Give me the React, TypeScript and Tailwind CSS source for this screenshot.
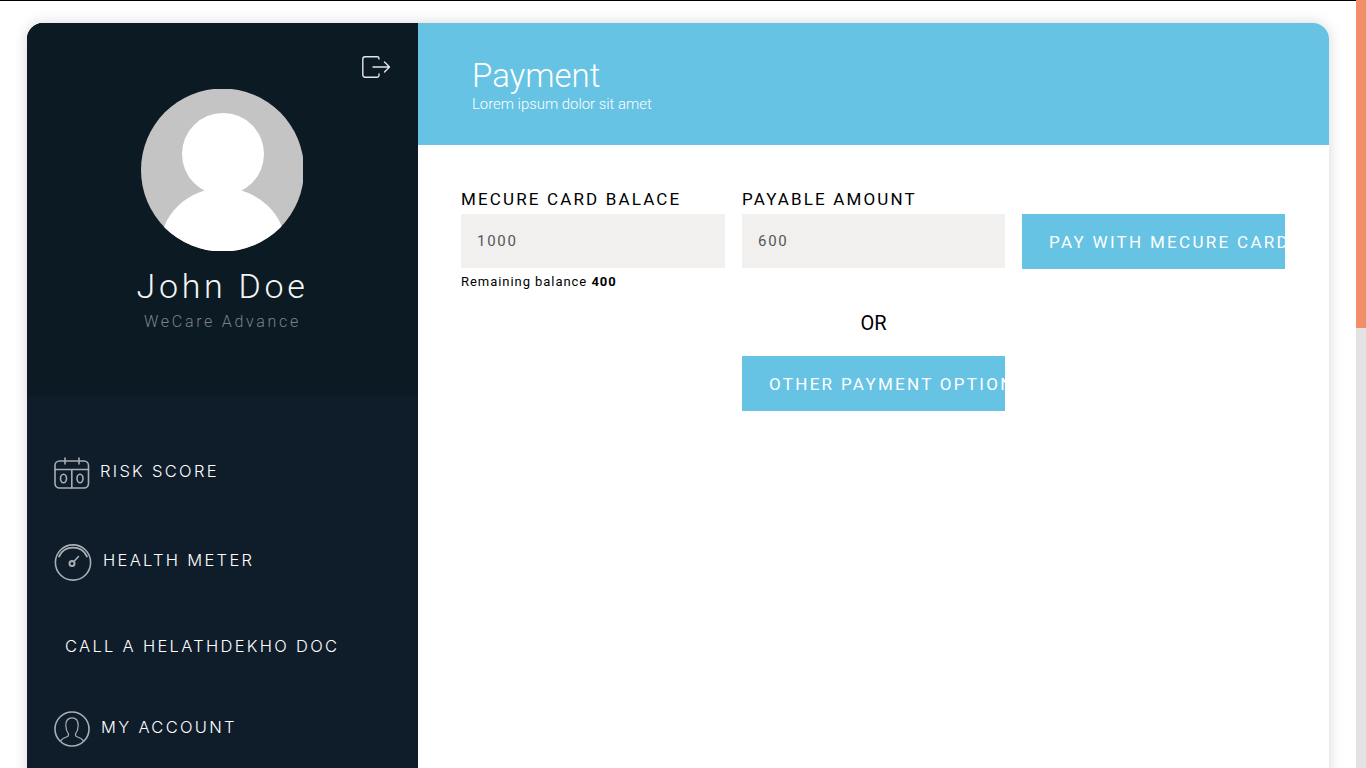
const sans = "font-['Roboto','Liberation_Sans',sans-serif]";
const menuFont = "font-['Inter','Liberation_Sans',sans-serif]";

function LogoutIcon() {
  return (
    <svg width="29" height="22" viewBox="0 0 29 22" fill="none" stroke="#e4e6e8" strokeWidth="1.4" strokeLinecap="round" strokeLinejoin="round">
      <path d="M17 3V2.5A1.8 1.8 0 0 0 15.2 0.8H3A2.2 2.2 0 0 0 0.8 3V19A2.2 2.2 0 0 0 3 21.2H15.2A1.8 1.8 0 0 0 17 19.5V18" />
      <path d="M11 11H27.5M22.5 6L27.5 11L22.5 16" />
    </svg>
  );
}

function Avatar() {
  return (
    <svg width="162" height="162" viewBox="0 0 162 162" className="block">
      <defs>
        <clipPath id="avatar-clip">
          <circle cx="81.5" cy="81" r="81.5" />
        </clipPath>
      </defs>
      <g clipPath="url(#avatar-clip)">
        <rect width="162" height="162" fill="#c4c4c4" />
        <circle cx="82" cy="65" r="41" fill="#fff" />
        <ellipse cx="82" cy="159" rx="63" ry="60" fill="#fff" />
      </g>
    </svg>
  );
}

function ScoreIcon() {
  return (
    <svg width="36" height="32" viewBox="0 0 36 32" fill="none" stroke="#a9aeb3" strokeWidth="1.6" strokeLinecap="round">
      <rect x="1" y="4" width="33.5" height="27" rx="4.5" />
      <path d="M1 12.5H34.5M17.8 12.5V31M11 1V7M25 1V7" />
      <ellipse cx="9.5" cy="21.5" rx="3" ry="4.2" />
      <ellipse cx="26" cy="21.5" rx="3" ry="4.2" />
    </svg>
  );
}

function MeterIcon() {
  return (
    <svg width="38" height="38" viewBox="0 0 38 38" fill="none" stroke="#a9aeb3" strokeWidth="1.6" strokeLinecap="round">
      <circle cx="19" cy="19.5" r="17.6" />
      <path d="M5 13.5A15.5 15.5 0 0 1 33 13.5" strokeWidth="1.8" />
      <circle cx="18" cy="20.5" r="2.5" strokeWidth="2" />
      <path d="M20 18.5L24.5 13.5" />
    </svg>
  );
}

function AccountIcon() {
  return (
    <svg width="36" height="36" viewBox="0 0 36 36" fill="none" stroke="#a9aeb3" strokeWidth="1.6" strokeLinecap="round" strokeLinejoin="round">
      <circle cx="18" cy="18" r="17" />
      <path d="M6.5 30C8 27.5 10 26.8 13 25.8C14.5 25.2 14.8 23.8 14.4 22.8C12.8 20.6 11.8 18 11.8 14.5C11.8 9.8 14.2 6.8 18 6.8C21.8 6.8 24.2 9.8 24.2 14.5C24.2 18 23.2 20.6 21.6 22.8C21.2 23.8 21.5 25.2 23 25.8C26 26.8 28 27.5 29.5 30" strokeWidth="1.2" />
    </svg>
  );
}

function Field({ label, value }: { label: string; value: string }) {
  return (
    <div>
      <label className="block h-[24px] text-[17px] leading-[19px] tracking-[2.15px] text-black">{label}</label>
      <input
        readOnly
        value={value}
        className="block w-full h-[54px] pl-[16px] bg-[#f1f0ee] text-[15px] tracking-[1.7px] text-[#55555c] outline-none"
      />
    </div>
  );
}

function ActionButton({ children }: { children: string }) {
  return (
    <button className="block w-full h-[55px] pl-[27px] pt-[2px] bg-[#66c3e4] text-left text-white text-[17px] tracking-[2.3px] whitespace-nowrap overflow-hidden">
      {children}
    </button>
  );
}

export default function App() {
  return (
    <div className={`flex h-screen overflow-hidden bg-white ${sans}`}>
      <div className="flex-1 min-w-0 border-t border-black pt-[22px] pl-[27px]">
        <div className="flex w-[1302px] h-[800px] rounded-t-[16px] overflow-hidden shadow-[0_0_14px_rgba(0,0,0,0.16)]">
          <aside className="w-[391px] shrink-0 bg-[#0f1d2b]">
            <div className="h-[374px] bg-[#0c1a23]">
              <div className="flex justify-end pt-[33px] pr-[27px]">
                <LogoutIcon />
              </div>
              <div className="flex justify-center mt-[11px] pr-[1px]">
                <Avatar />
              </div>
              <h2 className="mt-[15px] text-center text-[34px] leading-[40px] font-light tracking-[3.7px] text-[#f4f5f6]">John Doe</h2>
              <p className="mt-[6px] text-center text-[16px] leading-[20px] font-light tracking-[2.7px] text-[#7a838a]">WeCare Advance</p>
            </div>

            <nav className={`${menuFont} text-white text-[16.5px] leading-[20px] font-light tracking-[2.3px]`}>
              <div className="flex items-center pl-[27px] pt-[60px]">
                <ScoreIcon />
                <span className="ml-[10px] -mt-[4px]">RISK SCORE</span>
              </div>
              <div className="flex items-center pl-[27px] pt-[54px]">
                <MeterIcon />
                <span className="ml-[11px] -mt-[4px]">HEALTH METER</span>
              </div>
              <div className="pl-[38px] pt-[55px]">CALL A HELATHDEKHO DOC</div>
              <div className="flex items-center pl-[27px] pt-[55px]">
                <AccountIcon />
                <span className="ml-[11px] -mt-[4px]">MY ACCOUNT</span>
              </div>
            </nav>
          </aside>

          <main className="flex-1 bg-white">
            <header className="h-[122px] bg-[#66c3e4] pl-[54px] pt-[33px] text-white">
              <h1 className="text-[33px] leading-[39px] font-light">Payment</h1>
              <p className="text-[14.9px] leading-[18px] font-light">Lorem ipsum dolor sit amet</p>
            </header>

            <div className="pl-[43px] pt-[45px]">
              <div className="grid grid-cols-[264px_263px_263px] gap-x-[17px] items-start">
                <Field label="MECURE CARD BALACE" value="1000" />
                <Field label="PAYABLE AMOUNT" value="600" />
                <div className="pt-[24px]">
                  <ActionButton>PAY WITH MECURE CARD</ActionButton>
                </div>
              </div>
              <p className="mt-[5px] text-[13px] leading-[16px] tracking-[0.95px] text-black">
                Remaining balance <b className="font-bold">400</b>
              </p>
              <div className="grid grid-cols-[264px_263px_263px] gap-x-[17px]">
                <div className="col-start-2">
                  <p className="mt-[21px] text-center text-[20px] leading-[24px] text-black">OR</p>
                  <div className="mt-[21px]">
                    <ActionButton>OTHER PAYMENT OPTIONS</ActionButton>
                  </div>
                </div>
              </div>
            </div>
          </main>
        </div>
      </div>

      <div className="w-[10px] shrink-0 bg-[#e3e3e3]">
        <div className="h-[328px] bg-[#f18e68]" />
      </div>
    </div>
  );
}
